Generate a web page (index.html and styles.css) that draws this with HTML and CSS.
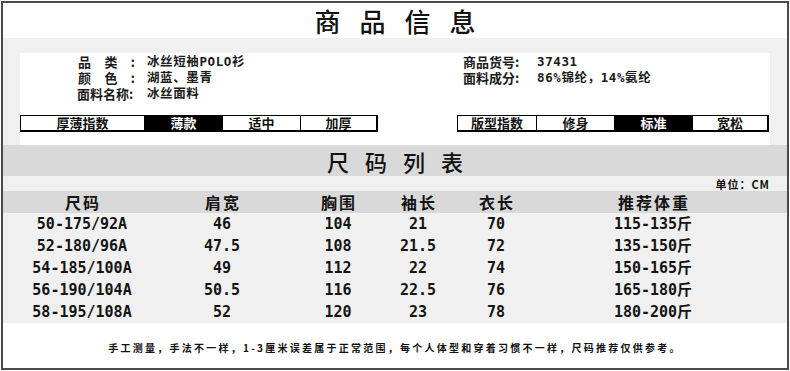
FILE: index.html
```html
<!DOCTYPE html>
<html lang="zh-CN">
<head>
<meta charset="utf-8">
<title>商品信息</title>
<link rel="stylesheet" href="styles.css">
</head>
<body>
<div class="frame">
  <header class="title-bar"><h1 class="title">商品信息</h1></header>

  <section class="info-area">
    <div class="panel">
      <div class="info-grid">
        <div class="info-col">
          <div class="info-row"><span class="label spread"><i>品</i><i>类</i><i>:</i></span><span class="value">冰丝短袖POLO衫</span></div>
          <div class="info-row"><span class="label spread"><i>颜</i><i>色</i><i>:</i></span><span class="value">湖蓝、墨青</span></div>
          <div class="info-row"><span class="label">面料名称:</span><span class="value">冰丝面料</span></div>
        </div>
        <div class="info-col">
          <div class="info-row"><span class="label">商品货号:</span><span class="value">37431</span></div>
          <div class="info-row"><span class="label">面料成分:</span><span class="value">86%锦纶，14%氨纶</span></div>
        </div>
      </div>
      <div class="bars">
        <div class="bar bar-left">
          <span class="cell cell-wide">厚薄指数</span>
          <span class="cell on">薄款</span>
          <span class="cell">适中</span>
          <span class="cell">加厚</span>
        </div>
        <div class="bar bar-right">
          <span class="cell">版型指数</span>
          <span class="cell">修身</span>
          <span class="cell on">标准</span>
          <span class="cell">宽松</span>
        </div>
      </div>
    </div>
  </section>

  <div class="band"><h2 class="subtitle">尺码列表</h2></div>
  <div class="unit-strip"><span class="unit">单位：CM</span></div>

  <div class="size-table">
    <div class="row head">
      <span>尺码</span><span>肩宽</span><span>胸围</span><span>袖长</span><span>衣长</span><span>推荐体重</span>
    </div>
    <div class="row">
      <span>50-175/92A</span><span>46</span><span>104</span><span>21</span><span>70</span><span>115-135斤</span>
    </div>
    <div class="row">
      <span>52-180/96A</span><span>47.5</span><span>108</span><span>21.5</span><span>72</span><span>135-150斤</span>
    </div>
    <div class="row">
      <span>54-185/100A</span><span>49</span><span>112</span><span>22</span><span>74</span><span>150-165斤</span>
    </div>
    <div class="row">
      <span>56-190/104A</span><span>50.5</span><span>116</span><span>22.5</span><span>76</span><span>165-180斤</span>
    </div>
    <div class="row">
      <span>58-195/108A</span><span>52</span><span>120</span><span>23</span><span>78</span><span>180-200斤</span>
    </div>
  </div>

  <footer class="note">手工测量，手法不一样，1-3厘米误差属于正常范围，每个人体型和穿着习惯不一样，尺码推荐仅供参考。</footer>
</div>
</body>
</html>
```

FILE: styles.css
```css
* { box-sizing: border-box; margin: 0; padding: 0; }

html, body {
  background: #ffffff;
}

body {
  width: 790px;
  height: 371px;
  overflow: hidden;
  font-family: "Noto Sans CJK SC", "DejaVu Sans", sans-serif;
  color: #111;
}

.frame {
  margin: 1px 0 0 1px;
  width: 788px;
  height: 369px;
  border: 2px solid #4a4a4a;
  display: flex;
  flex-direction: column;
  background: #fff;
}

/* header */
.title-bar {
  height: 35px;
  display: flex;
  align-items: center;
  justify-content: center;
  background: #fff;
}

.title {
  font-size: 26px;
  font-weight: 500;
  letter-spacing: 19px;
  padding-left: 19px;
  line-height: 30px;
  color: #111;
}

/* info */
.info-area {
  height: 107px;
  background: #f0f0f0;
  padding: 15px 17px 0 17px;
}

.panel {
  height: 92px;
  background: #fff;
  padding-top: 1px;
}

.info-grid {
  display: grid;
  grid-template-columns: 386px auto;
  padding-left: 57px;
  height: 48px;
}

.info-row {
  display: flex;
  align-items: center;
  height: 16px;
  font-size: 13px;
  font-weight: 700;
  line-height: 16px;
  color: #1a1a1a;
}

.label {
  width: 58px;
  white-space: nowrap;
}

.label.spread {
  display: flex;
  justify-content: space-between;
  padding-left: 1px;
}

.label i { font-style: normal; }

.value {
  margin-left: 12px;
  font-family: "DejaVu Sans Mono", "Noto Sans CJK SC", monospace;
  font-size: 12.5px;
  letter-spacing: 0.6px;
  white-space: nowrap;
}

.info-col:last-child .label { width: 62px; }

.bars {
  margin-top: 13px;
  display: flex;
  justify-content: space-between;
  padding-right: 1px;
}

.bar {
  display: flex;
  height: 17px;
  border: 1px solid #000;
  border-bottom-width: 2px;
  border-right-width: 2px;
  background: #fff;
}

.bar-left { width: 358px; }
.bar-right { width: 312px; }

.cell {
  width: 78px;
  display: flex;
  align-items: center;
  justify-content: center;
  font-size: 13px;
  font-weight: 700;
  line-height: 14px;
  border-left: 1px solid #000;
  color: #111;
}

.cell:first-child { border-left: none; }
.cell:last-child { flex: 1; }
.cell-wide { width: 123px; }

.cell.on {
  background: #000;
  color: #fff;
}

/* size list */
.band {
  height: 31px;
  background: #d9d9d9;
  display: flex;
  align-items: center;
  justify-content: center;
}

.subtitle {
  font-size: 22px;
  font-weight: 500;
  letter-spacing: 16px;
  padding-left: 16px;
  line-height: 26px;
  color: #111;
}

.unit-strip {
  height: 15px;
  background: #f0f0f0;
  display: flex;
  justify-content: flex-end;
  align-items: center;
  padding-right: 17px;
}

.unit {
  font-size: 11px;
  font-weight: 700;
  letter-spacing: 1px;
  line-height: 12px;
}

.size-table {
  background: #f0f0f0;
}

.row {
  display: grid;
  grid-template-columns: 158px 122px 110px 50px 106px 208px 1fr;
  height: 22px;
  align-items: center;
}

.row span {
  text-align: center;
  white-space: nowrap;
  font-family: "DejaVu Sans Mono", "Noto Sans CJK SC", monospace;
  font-size: 15px;
  font-weight: 700;
  line-height: 18px;
  color: #141414;
}

.row.head {
  background: #d9d9d9;
}

.row.head span {
  font-family: "Noto Sans CJK SC", sans-serif;
  font-size: 16px;
  letter-spacing: 2px;
  padding-left: 2px;
}

.note {
  flex: 1;
  background: #fff;
  display: flex;
  align-items: center;
  justify-content: center;
  font-size: 10px;
  font-weight: 700;
  letter-spacing: 2.25px;
  color: #111;
  padding-top: 4px;
}
```
